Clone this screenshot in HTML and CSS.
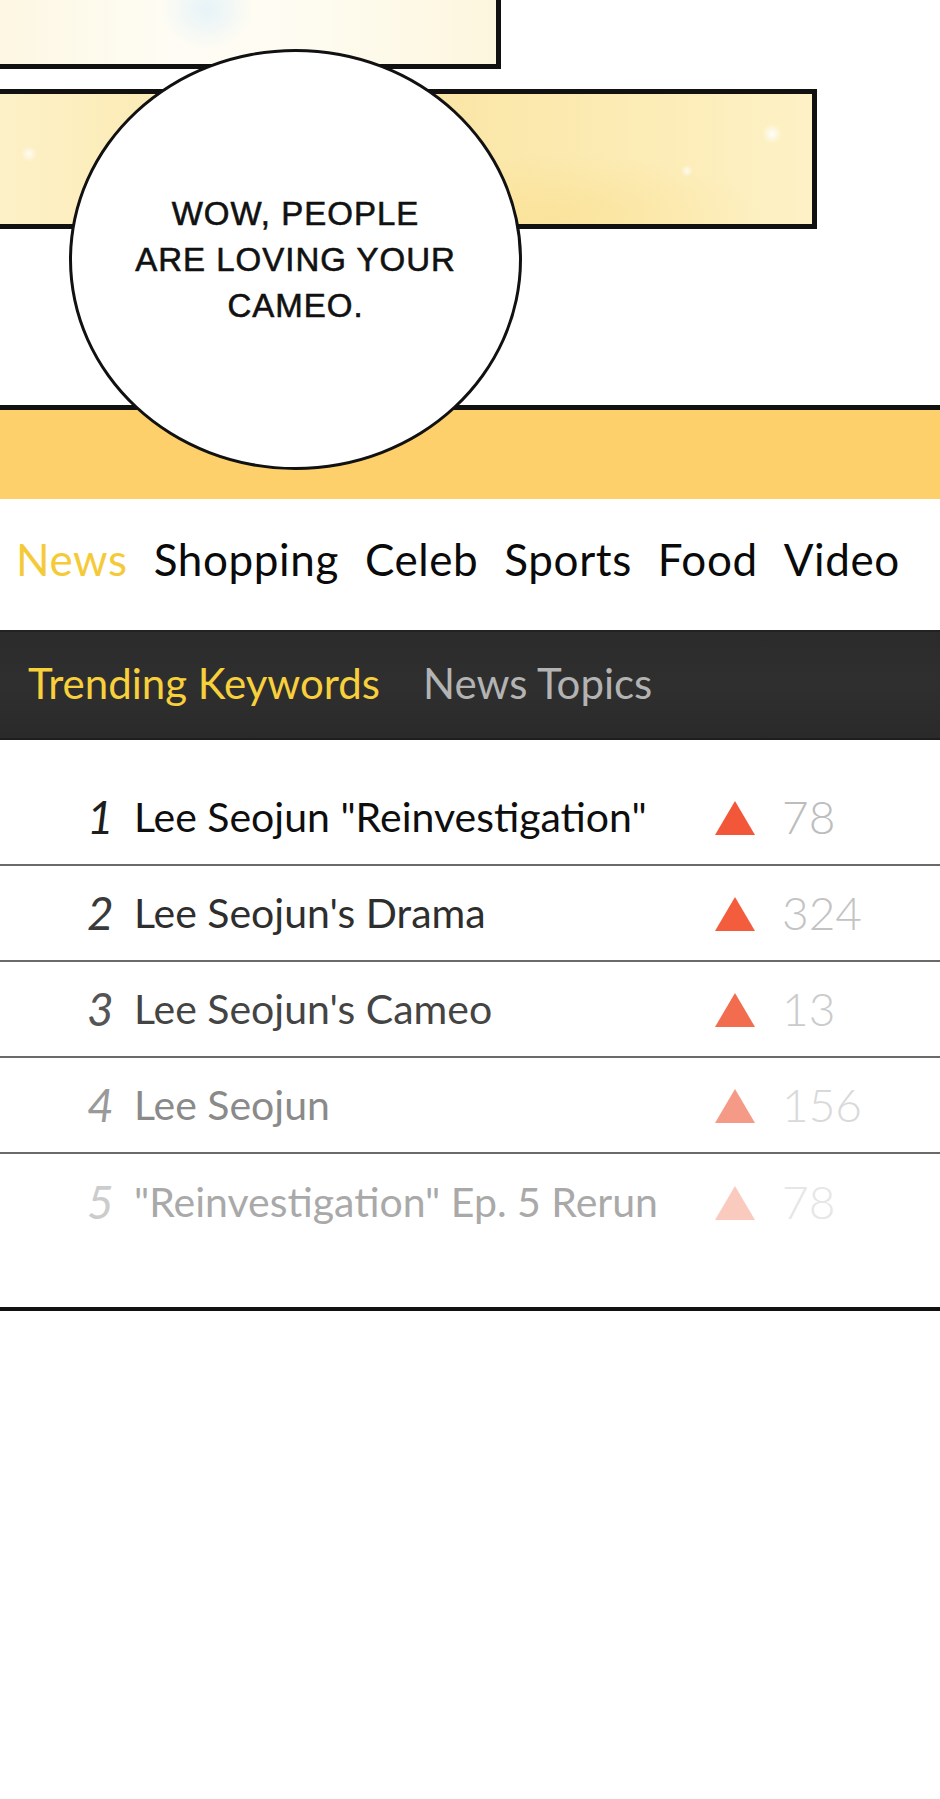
FILE: index.html
```html
<!DOCTYPE html>
<html lang="en">
<head>
<meta charset="utf-8">
<title>Trending</title>
<link rel="stylesheet" href="styles.css">
</head>
<body>
<div class="page">
  <section class="comic">
    <div class="panel panel-top"></div>
    <div class="panel panel-mid"></div>
    <div class="band"></div>
    <div class="bubble">
      <p class="bubble-text">WOW, PEOPLE<br>ARE LOVING YOUR<br>CAMEO.</p>
    </div>
  </section>

  <nav class="nav">
    <a class="nav-item active">News</a>
    <a class="nav-item">Shopping</a>
    <a class="nav-item">Celeb</a>
    <a class="nav-item">Sports</a>
    <a class="nav-item">Food</a>
    <a class="nav-item">Video</a>
  </nav>

  <div class="tabs">
    <span class="tab active">Trending Keywords</span>
    <span class="tab">News Topics</span>
  </div>

  <ol class="ranks">
    <li class="row r1">
      <span class="num">1</span>
      <span class="kw">Lee Seojun "Reinvestigation"</span>
      <span class="tri"></span>
      <span class="cnt">78</span>
    </li>
    <li class="row r2">
      <span class="num">2</span>
      <span class="kw">Lee Seojun's Drama</span>
      <span class="tri"></span>
      <span class="cnt">324</span>
    </li>
    <li class="row r3">
      <span class="num">3</span>
      <span class="kw">Lee Seojun's Cameo</span>
      <span class="tri"></span>
      <span class="cnt">13</span>
    </li>
    <li class="row r4">
      <span class="num">4</span>
      <span class="kw">Lee Seojun</span>
      <span class="tri"></span>
      <span class="cnt">156</span>
    </li>
    <li class="row r5">
      <span class="num">5</span>
      <span class="kw">"Reinvestigation" Ep. 5 Rerun</span>
      <span class="tri"></span>
      <span class="cnt">78</span>
    </li>
  </ol>
  <div class="end-rule"></div>
</div>
</body>
</html>
```

FILE: styles.css
```css
html, body {
  margin: 0;
  padding: 0;
  background: #ffffff;
}

.page {
  width: 940px;
  height: 1799px;
  overflow: hidden;
  font-family: Lato, "Open Sans", sans-serif;
}

/* ---------- comic strip ---------- */
.comic {
  position: relative;
  height: 499px;
  overflow: hidden;
  background: #ffffff;
}

.panel {
  position: absolute;
  border: 5px solid #111;
  box-sizing: border-box;
}

.panel-top {
  left: -10px;
  top: -10px;
  width: 511px;
  height: 79px;
  background:
    radial-gradient(ellipse 45px 40px at 212px 14px, rgba(222, 240, 250, 0.75), rgba(222, 240, 250, 0) 100%),
    linear-gradient(90deg, #fdf7e2 0%, #fefcf4 35%, #fefcf2 60%, #fdf6de 100%);
}

.panel-mid {
  left: -10px;
  top: 89px;
  width: 827px;
  height: 140px;
  background:
    radial-gradient(circle 10px at 777px 40px, rgba(255, 255, 255, 0.9), rgba(255, 255, 255, 0)),
    radial-gradient(circle 6px at 692px 77px, rgba(255, 255, 255, 0.8), rgba(255, 255, 255, 0)),
    radial-gradient(circle 8px at 34px 60px, rgba(255, 255, 255, 0.8), rgba(255, 255, 255, 0)),
    radial-gradient(ellipse 200px 60px at 560px 120px, rgba(250, 222, 140, 0.55), rgba(250, 222, 140, 0)),
    linear-gradient(90deg, #fdf1c8 0%, #fbe8ac 30%, #fae6a6 55%, #fcecb6 80%, #fdf1c6 100%);
}

.band {
  position: absolute;
  left: 0;
  right: 0;
  top: 405px;
  bottom: 0;
  background: #fdd06b;
  border-top: 5px solid #111;
}

.bubble {
  position: absolute;
  left: 69px;
  top: 49px;
  width: 453px;
  height: 421px;
  box-sizing: border-box;
  border: 3px solid #111;
  border-radius: 50%;
  background: #ffffff;
  display: flex;
  align-items: center;
  justify-content: center;
}

.bubble-text {
  margin: 0;
  font-family: "Liberation Sans", Arial, sans-serif;
  font-size: 33px;
  line-height: 46px;
  letter-spacing: 1px;
  text-align: center;
  color: #111;
  -webkit-text-stroke: 0.6px #111;
}

/* ---------- navigation ---------- */
.nav {
  display: flex;
  gap: 26px;
  padding: 35px 0 46px 16px;
  height: 50px;
  align-items: center;
}

.nav-item {
  font-size: 44px;
  line-height: 50px;
  letter-spacing: 0.6px;
  color: #0a0a0a;
  text-decoration: none;
}

.nav-item.active {
  color: #f5ca38;
}

/* ---------- tabs ---------- */
.tabs {
  height: 110px;
  box-sizing: border-box;
  padding: 26px 0 0 28px;
  display: flex;
  gap: 43px;
  background: linear-gradient(180deg, #2b2b2b 0%, #2f2f2f 50%, #2a2a2a 100%);
  border-top: 2px solid #222;
  border-bottom: 2px solid #1e1e1e;
}

.tab {
  font-size: 42px;
  line-height: 50px;
  color: #b3b3b3;
}

.tab.active {
  color: #f7d03c;
}

/* ---------- ranking list ---------- */
.ranks {
  list-style: none;
  margin: 0;
  padding: 30px 0 0 0;
}

.row {
  display: grid;
  grid-template-columns: 84px 50px 581px 40px auto;
  align-items: center;
  height: 96px;
  box-sizing: border-box;
  border-bottom: 2px solid #6a6a6a;
}

.row.r5 {
  border-bottom: none;
}

.num {
  grid-column: 2;
  font-size: 46px;
  font-style: italic;
  font-weight: 400;
  line-height: 56px;
  padding-left: 3px;
}

.kw {
  grid-column: 3;
  font-size: 41px;
  line-height: 48px;
  white-space: nowrap;
}

.tri {
  grid-column: 4;
  width: 0;
  height: 0;
  border-left: 20px solid transparent;
  border-right: 20px solid transparent;
  border-bottom: 34px solid #f35a3a;
  margin-top: 2px;
}

.cnt {
  grid-column: 5;
  margin-left: 27px;
  font-size: 46px;
  font-weight: 300;
  line-height: 56px;
}

.r1 .num { color: #1e1e1e; }
.r1 .kw  { color: #0e0e0e; }
.r1 .tri { border-bottom-color: #f3573a; }
.r1 .cnt { color: #bdbdbd; }

.r2 .num { color: #3a3a3a; }
.r2 .kw  { color: #2e2e2e; }
.r2 .tri { border-bottom-color: #f35c3d; }
.r2 .cnt { color: #c3c3c3; }

.r3 .num { color: #555555; }
.r3 .kw  { color: #444444; }
.r3 .tri { border-bottom-color: #f26c4f; }
.r3 .cnt { color: #cbcbcb; }

.r4 .num { color: #9a9a9a; }
.r4 .kw  { color: #8a8a8a; }
.r4 .tri { border-bottom-color: #f59a87; }
.r4 .cnt { color: #d9d9d9; }

.r5 .num { color: #cccccc; }
.r5 .kw  { color: #a9a9a9; }
.r5 .tri { border-bottom-color: #fbcabe; }
.r5 .cnt { color: #e6e6e6; }

.end-rule {
  margin-top: 57px;
  height: 4px;
  background: #111;
}
```
